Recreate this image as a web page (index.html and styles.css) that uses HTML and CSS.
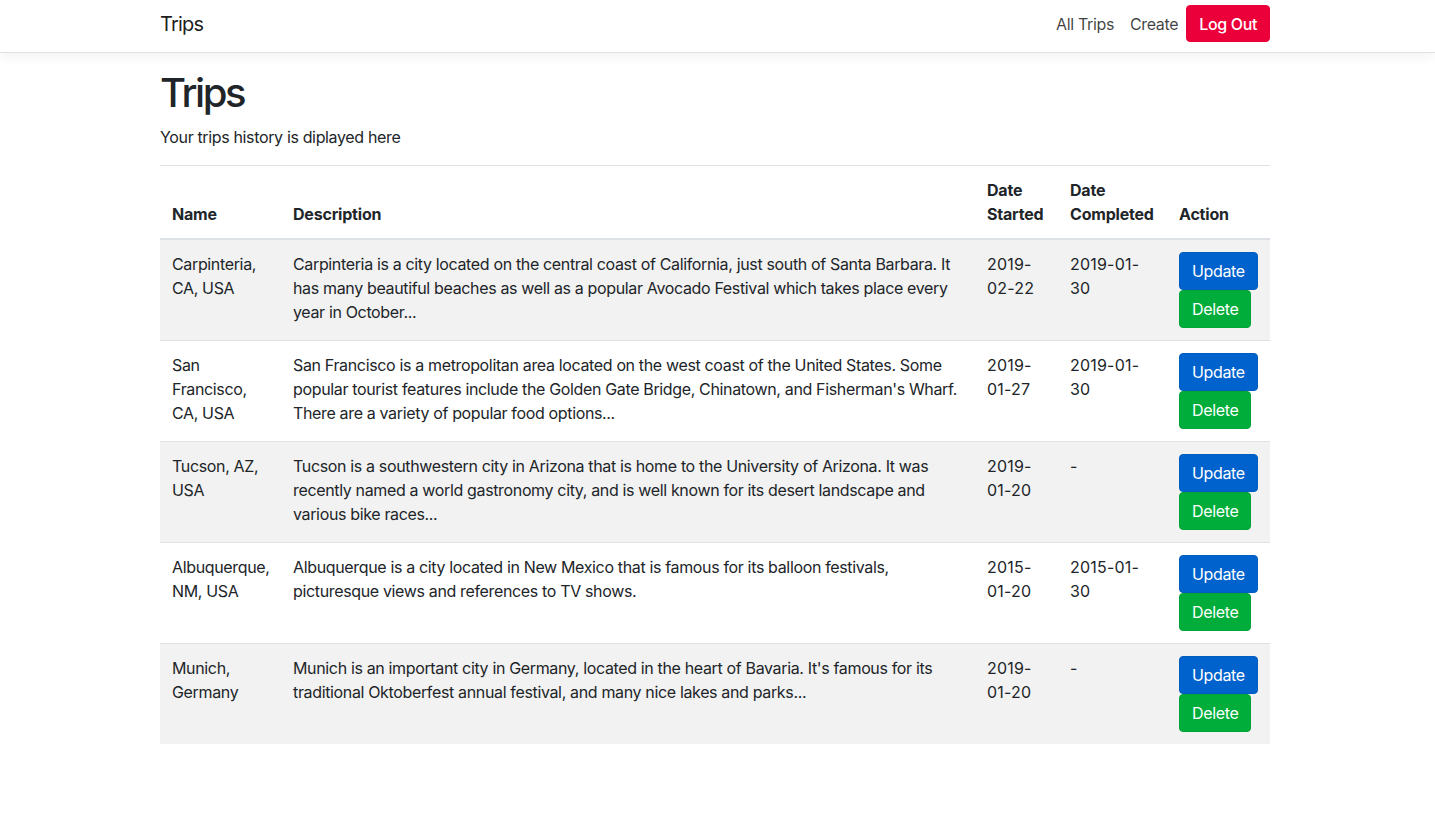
FILE: index.html
```html
<!DOCTYPE html>
<html>
<head>
<meta charset="utf-8">
<title>Trips</title>
<link rel="stylesheet" href="styles.css">
</head>
<body>
<nav class="navbar">
  <div class="nav-inner">
    <a class="brand" href="#">Trips</a>
    <div class="nav-links">
      <a class="nav-link" href="#">All Trips</a>
      <a class="nav-link" href="#">Create</a>
      <button class="btn btn-red">Log Out</button>
    </div>
  </div>
</nav>
<main class="container">
  <h1 class="title">Trips</h1>
  <p class="lead">Your trips history is diplayed here</p>
  <table class="table">
    <colgroup>
      <col class="c-name"><col class="c-desc"><col class="c-start"><col class="c-done"><col class="c-act">
    </colgroup>
    <thead>
      <tr><th>Name</th><th>Description</th><th>Date Started</th><th>Date Completed</th><th>Action</th></tr>
    </thead>
    <tbody>
      <tr class="odd">
        <td>Carpinteria, CA, USA</td>
        <td>Carpinteria is a city located on the central coast of California, just south of Santa Barbara. It has many beautiful beaches as well as a popular Avocado Festival which takes place every year in October...</td>
        <td class="date">2019-02-22</td>
        <td class="date">2019-01-30</td>
        <td><div class="actions"><button class="btn btn-blue">Update</button><button class="btn btn-green">Delete</button></div></td>
      </tr>
      <tr>
        <td>San Francisco, CA, USA</td>
        <td>San Francisco is a metropolitan area located on the west coast of the United States. Some popular tourist features include the Golden Gate Bridge, Chinatown, and Fisherman's Wharf. There are a variety of popular food options...</td>
        <td class="date">2019-01-27</td>
        <td class="date">2019-01-30</td>
        <td><div class="actions"><button class="btn btn-blue">Update</button><button class="btn btn-green">Delete</button></div></td>
      </tr>
      <tr class="odd">
        <td>Tucson, AZ, USA</td>
        <td>Tucson is a southwestern city in Arizona that is home to the University of Arizona. It was recently named a world gastronomy city, and is well known for its desert landscape and various bike races...</td>
        <td class="date">2019-01-20</td>
        <td class="date">-</td>
        <td><div class="actions"><button class="btn btn-blue">Update</button><button class="btn btn-green">Delete</button></div></td>
      </tr>
      <tr>
        <td>Albuquerque, NM, USA</td>
        <td>Albuquerque is a city located in New Mexico that is famous for its balloon festivals, picturesque views and references to TV shows.</td>
        <td class="date">2015-01-20</td>
        <td class="date">2015-01-30</td>
        <td><div class="actions"><button class="btn btn-blue">Update</button><button class="btn btn-green">Delete</button></div></td>
      </tr>
      <tr class="odd">
        <td>Munich, Germany</td>
        <td>Munich is an important city in Germany, located in the heart of Bavaria. It's famous for its traditional Oktoberfest annual festival, and many nice lakes and parks...</td>
        <td class="date">2019-01-20</td>
        <td class="date">-</td>
        <td><div class="actions"><button class="btn btn-blue">Update</button><button class="btn btn-green">Delete</button></div></td>
      </tr>
    </tbody>
  </table>
</main>
</body>
</html>
```

FILE: styles.css
```css
* { box-sizing: border-box; }
html, body { margin: 0; padding: 0; }
body {
  font-family: Inter, "Helvetica Neue", "Liberation Sans", Arial, sans-serif;
  font-size: 16px;
  line-height: 1.5;
  letter-spacing: -0.35px;
  color: #212529;
  background: #fff;
}
.navbar {
  border-bottom: 1px solid #dee2e6;
  box-shadow: 0 4px 12px rgba(0, 0, 0, 0.05);
  background: #fff;
}
.nav-inner {
  width: 1110px;
  margin-left: 160px;
  height: 52px;
  padding-top: 5px;
  padding-bottom: 10px;
  display: flex;
  align-items: center;
  justify-content: space-between;
}
.brand {
  font-size: 20px;
  line-height: 30px;
  letter-spacing: -0.8px;
  color: rgba(0, 0, 0, 0.9);
  text-decoration: none;
}
.nav-links {
  display: flex;
  align-items: center;
}
.nav-link {
  padding: 0 8px;
  color: rgba(0, 0, 0, 0.75);
  text-decoration: none;
}
.btn {
  font-family: inherit;
  font-size: 16px;
  line-height: 24px;
  letter-spacing: -0.35px;
  padding: 6px 12px;
  border: 1px solid transparent;
  border-radius: 4px;
  color: #fff;
  cursor: pointer;
  display: inline-block;
}
.btn-red {
  background: #ec0039;
  border-color: #ec0039;
  height: 37px;
  padding-top: 5px;
  padding-bottom: 5px;
  font-weight: 500;
}
.btn-blue { background: #0062cc; border-color: #005cbf; }
.btn-green { background: #00ad3a; border-color: #00a537; }
.container {
  width: 1110px;
  margin-left: 160px;
  margin-top: 16px;
}
.title {
  font-size: 40px;
  font-weight: 500;
  line-height: 48px;
  letter-spacing: -2.4px;
  margin: 0 0 8px;
}
.lead {
  margin: 0 0 16px;
}
.table {
  width: 100%;
  border-collapse: collapse;
  table-layout: fixed;
}
.c-name { width: 121px; }
.c-desc { width: 694px; }
.c-start { width: 83px; }
.c-done { width: 109px; }
.c-act { width: 103px; }
.table th, .table td {
  padding: 12px;
  text-align: left;
  vertical-align: top;
  border-top: 1px solid #dee2e6;
}
.table th {
  vertical-align: bottom;
  font-weight: 700;
  letter-spacing: -0.2px;
  border-bottom: 2px solid #dee2e6;
}
.table td.date { letter-spacing: 0.2px; }
.table tbody tr:first-child td { border-top: 0; }
.table tr.odd td { background: #f2f2f2; }
.actions {
  display: flex;
  flex-direction: column;
  align-items: flex-start;
}
```
